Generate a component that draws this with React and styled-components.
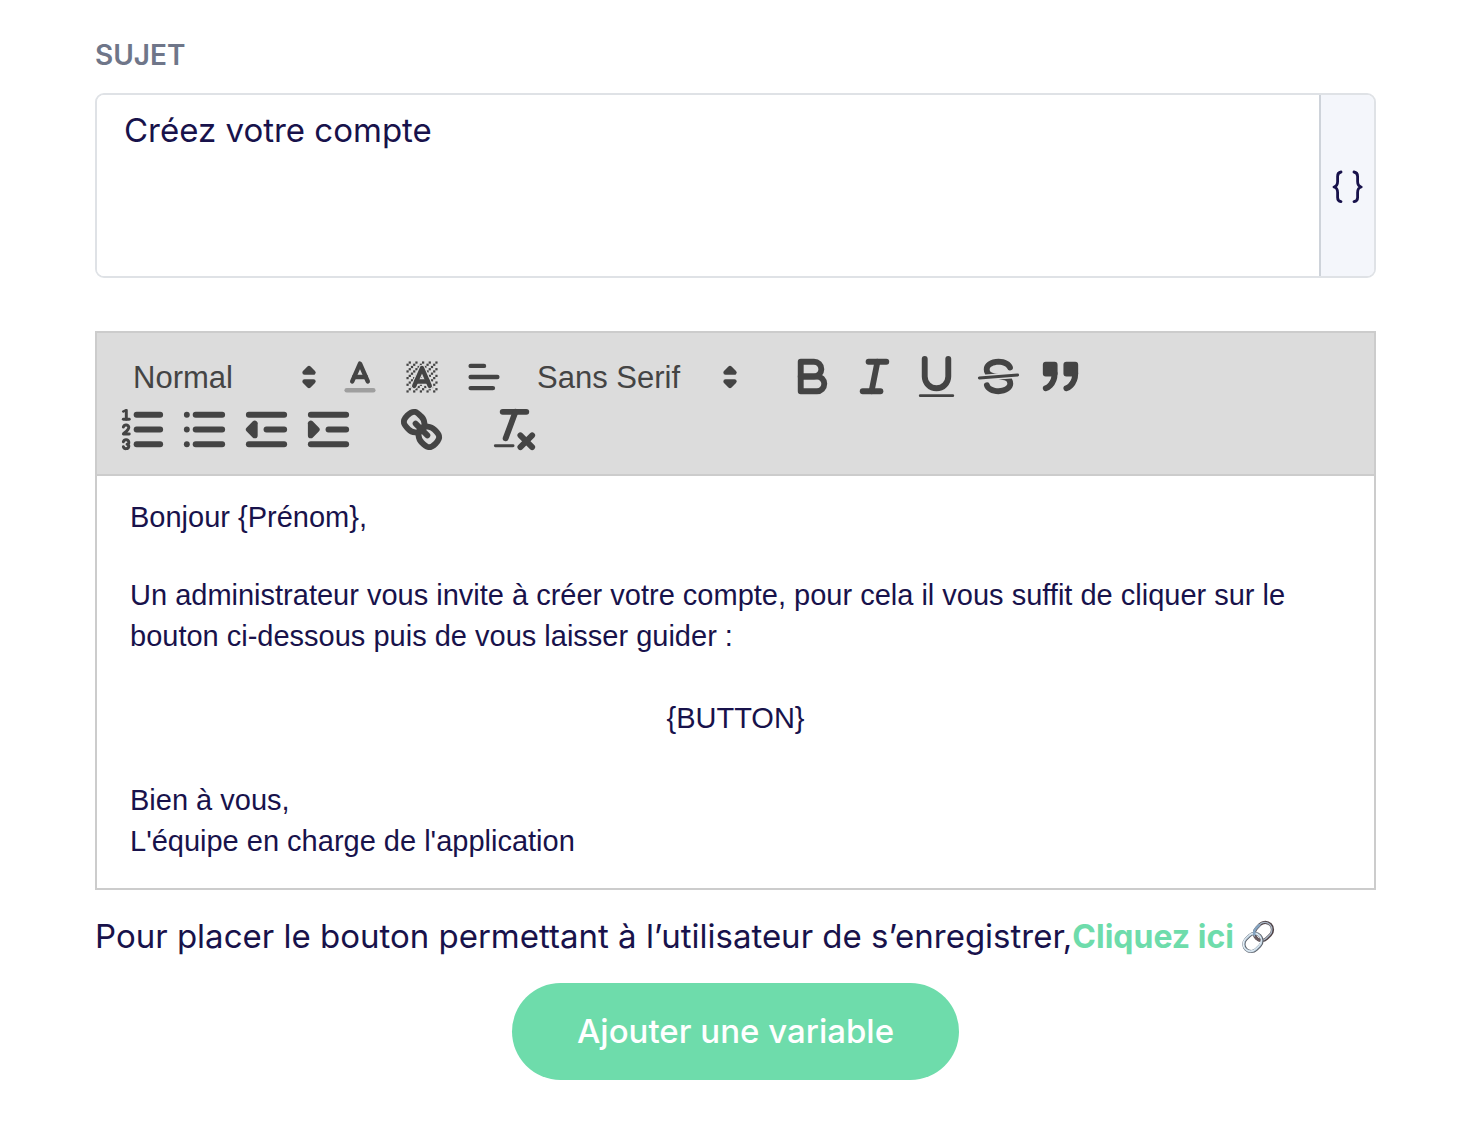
import { useState } from "react";
import styled, { createGlobalStyle } from "styled-components";

export default function App() {
    const [subject, setSubject] = useState('Créez votre compte');

    return (
        <>
            <GlobalStyle/>
            <Page>
                <Label htmlFor='subject'>SUJET</Label>
                <SubjectField>
                    <SubjectInput id='subject' value={subject} onChange={e => setSubject(e.target.value)}/>
                    <VariableButton type='button' aria-label='Variables'>
                        <BracesIcon/>
                    </VariableButton>
                </SubjectField>
                <Toolbar/>
                <Editor contentEditable suppressContentEditableWarning spellCheck={false}>
                    <p>Bonjour {'{Prénom}'},</p>
                    <Blank/>
                    <p>Un administrateur vous invite à créer votre compte, pour cela il vous suffit de cliquer sur le bouton ci-dessous puis de vous laisser guider :</p>
                    <p><br/></p>
                    <Centered>{'{BUTTON}'}</Centered>
                    <p><br/></p>
                    <p>Bien à vous,</p>
                    <p>L'équipe en charge de l'application</p>
                </Editor>
                <Help>
                    <p>Pour placer le bouton permettant à l’utilisateur de s’enregistrer,<a href='#bouton'>Cliquez ici</a></p>
                    <ChainIcon/>
                </Help>
                <AddButton type='button'>Ajouter une variable</AddButton>
            </Page>
        </>
    );
}

function Toolbar() {
    return (
        <Bar>
            <Group>
                <Picker label='Titre' width={218} options={['Normal', 'Titre 1', 'Titre 2']}/>
                <SmallTool name='color'/>
                <SmallTool name='background'/>
                <SmallTool name='align'/>
                <Picker label='Police' width={235} options={['Sans Serif', 'Serif', 'Monospace']}/>
            </Group>
            <ToolGroup tools={['bold', 'italic', 'underline', 'strike', 'blockquote']}/>
            <ToolGroup tools={['ordered', 'bullet', 'outdent', 'indent']}/>
            <ToolGroup tools={['link']}/>
            <ToolGroup tools={['clean']}/>
        </Bar>
    );
}

function ToolGroup({ tools }) {
    return (
        <Group>
            {tools.map(name => (
                <ToolButton key={name} type='button' aria-label={name}>
                    <Icon $size={53} viewBox='0 0 18 18'>{icons[name]}</Icon>
                </ToolButton>
            ))}
        </Group>
    );
}

function SmallTool({ name }) {
    return (
        <ToolButton type='button' aria-label={name}>
            <Icon $size={40} viewBox='0 0 18 18'>{icons[name]}</Icon>
        </ToolButton>
    );
}

function Picker({ label, width, options }) {
    return (
        <PickerBox $width={width}>
            <select aria-label={label}>
                {options.map(o => <option key={o}>{o}</option>)}
            </select>
            <Icon $size={40} viewBox='0 0 18 18'>
                <polygon className='both' points='7 11 9 13 11 11 7 11'/>
                <polygon className='both' points='7 7 9 5 11 7 7 7'/>
            </Icon>
        </PickerBox>
    );
}

function BracesIcon() {
    return (
        <svg width='32' height='34' viewBox='0 0 32 34' fill='none' stroke='#18124b' strokeWidth='2.8' strokeLinecap='round' strokeLinejoin='round'>
            <path d='M9 3C6.4 3.4 5.6 5 5.6 7.4V12.6C5.6 15.6 4.6 17.4 2 18C4.6 18.6 5.6 20.4 5.6 23.4V28.4C5.6 30.8 6.4 32.2 9 32.6'/>
            <path d='M22 3C24.6 3.4 25.6 5 25.6 7.4V12.6C25.6 15.6 26.6 17.4 29.2 18C26.6 18.6 25.6 20.4 25.6 23.4V28.4C25.6 30.8 24.6 32.2 22 32.6'/>
        </svg>
    );
}

function ChainIcon() {
    return (
        <svg width='36' height='36' viewBox='0 0 36 36' fill='none'>
            <g transform='rotate(-45 18 18)'>
                <rect x='16' y='10.6' width='19.6' height='14.6' rx='7.3' stroke='#4f4246' strokeWidth='3.2'/>
                <rect x='15.8' y='10.3' width='19.4' height='14.4' rx='7.2' stroke='#a9b6c4' strokeWidth='1.3'/>
                <rect x='0.8' y='11' width='19.6' height='14.6' rx='7.3' stroke='#5d6068' strokeWidth='3.2'/>
                <rect x='0.6' y='10.7' width='19.4' height='14.4' rx='7.2' stroke='#b4cadb' strokeWidth='2.2'/>
                <rect x='0.5' y='10.5' width='19.4' height='14.4' rx='7.2' stroke='#f0f6fa' strokeWidth='0.9'/>
                <path d='M17 14.5C17.8 12 20 10.5 23 10.5H28' stroke='#84a3c0' strokeWidth='2.6'/>
                <path d='M16.3 15.5C15.7 17.8 16.2 20 17.6 22' stroke='#6a5b60' strokeWidth='2.6'/>
            </g>
        </svg>
    );
}

// diagonal hatching, one dot each third cell
const dots = [];
for (let y = 2; y < 16; y++) {
    for (let x = 2; x < 16; x++) {
        if ((x + y) % 3 === 2) dots.push([x, y]);
    }
}

const icons = {
    color: <>
        <line x1='3' x2='15' y1='15' y2='15' opacity='0.4'/>
        <polyline points='5.5 11 9 3 12.5 11'/>
        <line x1='11.63' x2='6.38' y1='9' y2='9'/>
    </>,
    background: <>
        {dots.map(([x, y]) => <rect key={`${x}-${y}`} className='fill' x={x} y={y} width='1' height='1'/>)}
        <path className='halo' d='M5.5 13L9 5L12.5 13M6.4 11H11.6'/>
        <polyline points='5.5 13 9 5 12.5 13'/>
        <line x1='11.63' x2='6.38' y1='11' y2='11'/>
    </>,
    align: <>
        <line x1='3' x2='15' y1='9' y2='9'/>
        <line x1='3' x2='13' y1='14' y2='14'/>
        <line x1='3' x2='9' y1='4' y2='4'/>
    </>,
    bold: <>
        <path d='M5,4H9.5A2.5,2.5,0,0,1,12,6.5v0A2.5,2.5,0,0,1,9.5,9H5Z'/>
        <path d='M5,9h5.5A2.5,2.5,0,0,1,13,11.5v0A2.5,2.5,0,0,1,10.5,14H5Z'/>
    </>,
    italic: <>
        <line x1='7' x2='13' y1='4' y2='4'/>
        <line x1='5' x2='11' y1='14' y2='14'/>
        <line x1='8' x2='10' y1='14' y2='4'/>
    </>,
    underline: <>
        <path d='M5,3V9a4.012,4.012,0,0,0,4,4H9a4.012,4.012,0,0,0,4-4V3'/>
        <rect className='fill' height='1' rx='0.5' ry='0.5' width='12' x='3' y='15'/>
    </>,
    strike: <>
        <line className='thin' x1='15.5' x2='2.5' y1='8.5' y2='9.5'/>
        <path className='fill' d='M9.007,8C6.542,7.791,6,7.519,6,6.5,6,5.792,7.283,5,9,5c1.571,0,2.765.679,2.969,1.309a1,1,0,0,0,1.9-.617C13.356,4.106,11.354,3,9,3,6.2,3,4,4.538,4,6.5a3.2,3.2,0,0,0,.5,1.843Z'/>
        <path className='fill' d='M8.984,10C11.457,10.208,12,10.479,12,11.5c0,0.708-1.283,1.5-3,1.5-1.571,0-2.765-.679-2.969-1.309a1,1,0,1,0-1.9.617C4.644,13.894,6.646,15,9,15c2.8,0,5-1.538,5-3.5a3.2,3.2,0,0,0-.5-1.843Z'/>
    </>,
    blockquote: <>
        <rect className='both' height='3' width='3' x='4' y='5'/>
        <rect className='both' height='3' width='3' x='11' y='5'/>
        <path className='both' d='M7,8c0,4.031-3,5-3,5'/>
        <path className='both' d='M14,8c0,4.031-3,5-3,5'/>
    </>,
    ordered: <>
        <line x1='7' x2='15' y1='4' y2='4'/>
        <line x1='7' x2='15' y1='9' y2='9'/>
        <line x1='7' x2='15' y1='14' y2='14'/>
        <line className='thin' x1='2.5' x2='4.5' y1='5.5' y2='5.5'/>
        <path className='fill' d='M3.5,6A0.5,0.5,0,0,1,3,5.5V3.085l-0.276.138A0.5,0.5,0,0,1,2.053,3c-0.124-.247-0.023-0.324.224-0.447l1-.5A0.5,0.5,0,0,1,4,2.5v3A0.5,0.5,0,0,1,3.5,6Z'/>
        <path className='thin' d='M4.5,10.5h-2c0-.234,1.85-1.076,1.85-2.234A0.959,0.959,0,0,0,2.5,8.156'/>
        <path className='thin' d='M2.5,14.846a0.959,0.959,0,0,0,1.85-.109A0.7,0.7,0,0,0,3.75,14a0.688,0.688,0,0,0,.6-0.736,0.959,0.959,0,0,0-1.85-.109'/>
    </>,
    bullet: <>
        <line x1='6' x2='15' y1='4' y2='4'/>
        <line x1='6' x2='15' y1='9' y2='9'/>
        <line x1='6' x2='15' y1='14' y2='14'/>
        <line x1='3' x2='3' y1='4' y2='4'/>
        <line x1='3' x2='3' y1='9' y2='9'/>
        <line x1='3' x2='3' y1='14' y2='14'/>
    </>,
    outdent: <>
        <line x1='3' x2='15' y1='14' y2='14'/>
        <line x1='3' x2='15' y1='4' y2='4'/>
        <line x1='9' x2='15' y1='9' y2='9'/>
        <polyline className='both' points='5 7 5 11 3 9 5 7'/>
    </>,
    indent: <>
        <line x1='3' x2='15' y1='14' y2='14'/>
        <line x1='3' x2='15' y1='4' y2='4'/>
        <line x1='9' x2='15' y1='9' y2='9'/>
        <polyline className='both' points='3 7 3 11 5 9 3 7'/>
    </>,
    link: <>
        <line x1='7' x2='11' y1='7' y2='11'/>
        <path d='M8.9,4.577a3.476,3.476,0,0,1,.36,4.679A3.476,3.476,0,0,1,4.577,8.9C3.185,7.5,2.035,6.4,4.217,4.217S7.5,3.185,8.9,4.577Z'/>
        <path d='M13.423,9.1a3.476,3.476,0,0,0-4.679-.36,3.476,3.476,0,0,0,.36,4.679c1.392,1.392,2.5,2.542,4.679.36S14.815,10.5,13.423,9.1Z'/>
    </>,
    clean: <>
        <line x1='5' x2='13' y1='3' y2='3'/>
        <line x1='6' x2='9.35' y1='12' y2='3'/>
        <line x1='11' x2='15' y1='11' y2='15'/>
        <line x1='15' x2='11' y1='11' y2='15'/>
        <rect className='fill' height='1' rx='0.5' ry='0.5' width='7' x='2' y='14'/>
    </>,
};

const GlobalStyle = createGlobalStyle`
    * {
        box-sizing: border-box;
    }
    body {
        margin: 0;
        background: #fff;
        color: #18124b;
        font-family: Inter, "Liberation Sans", sans-serif;
    }
    p {
        margin: 0;
    }
    button, select, textarea {
        font: inherit;
        color: inherit;
    }
`

const Page = styled.main`
    display: flex;
    flex-direction: column;
    padding: 36px 104px 36px 95px;
`

const Label = styled.label`
    color: #6f7689;
    font-size: 28px;
    font-weight: 600;
    line-height: 38px;
    margin-bottom: 19px;
`

const SubjectField = styled.div`
    display: flex;
    height: 185px;
    margin-bottom: 53px;
    border: 2px solid #dfe2e6;
    border-radius: 9px;
    overflow: hidden;
`

const SubjectInput = styled.textarea`
    flex: 1;
    border: 0;
    outline: 0;
    resize: none;
    padding: 11px 27px;
    background: #fff;
    font-size: 33px;
    line-height: 48px;
`

const VariableButton = styled.button`
    display: flex;
    align-items: center;
    justify-content: center;
    width: 55px;
    padding: 0;
    border: 0;
    border-left: 2px solid #ced3da;
    background: #f4f6fb;
`

const Bar = styled.div`
    display: flex;
    flex-wrap: wrap;
    column-gap: 31px;
    padding: 17px 14px 18px;
    border: 2px solid #ccc;
    background: #dcdcdc;
    color: #444;
    font-family: "Liberation Sans", Arial, sans-serif;
`

const Group = styled.div`
    display: flex;
`

const ToolButton = styled.button`
    display: flex;
    align-items: center;
    justify-content: center;
    width: 62px;
    height: 53px;
    padding: 0;
    border: 0;
    background: none;
`

const Icon = styled.svg`
    flex: none;
    width: ${props => props.$size}px;
    height: ${props => props.$size}px;
    fill: none;
    stroke: #444;
    stroke-width: 2;
    stroke-linecap: round;
    stroke-linejoin: round;
    .fill {
        fill: #444;
        stroke: none;
    }
    .both {
        fill: #444;
    }
    .thin {
        stroke-width: 1;
    }
    .halo {
        stroke: #dcdcdc;
        stroke-width: 3;
    }
`

const PickerBox = styled.div`
    position: relative;
    display: flex;
    align-items: center;
    width: ${props => props.$width}px;
    select {
        appearance: none;
        width: 100%;
        height: 53px;
        padding: 2px 40px 0 22px;
        border: 0;
        outline: 0;
        background: none;
        font-size: 31px;
        font-weight: 500;
    }
    svg {
        position: absolute;
        right: 0;
        pointer-events: none;
    }
`

const Editor = styled.div`
    padding: 21px 33px 26px;
    border: 2px solid #ccc;
    border-top: 0;
    outline: 0;
    font-family: "Liberation Sans", Arial, sans-serif;
    font-size: 29px;
    line-height: 41px;
`

const Blank = styled.div`
    height: 37px;
`

const Centered = styled.p`
    text-align: center;
`

const Help = styled.div`
    display: flex;
    align-items: center;
    margin-top: 22px;
    font-size: 33px;
    line-height: 48px;
    a {
        color: #6edcab;
        font-size: 32px;
        font-weight: 700;
        text-decoration: none;
    }
    svg {
        flex: none;
        margin-left: 6px;
    }
`

const AddButton = styled.button`
    align-self: center;
    margin-top: 22px;
    padding: 24px 65px;
    border: 0;
    border-radius: 49px;
    background: #6edcab;
    color: #fff;
    font-size: 33px;
    font-weight: 500;
    line-height: 49px;
`
